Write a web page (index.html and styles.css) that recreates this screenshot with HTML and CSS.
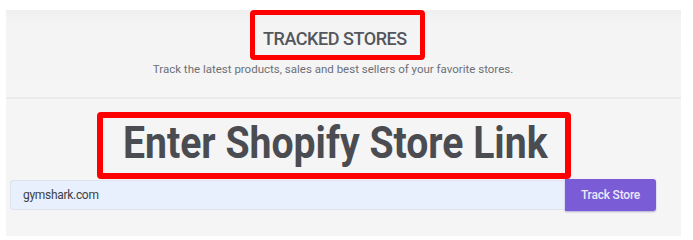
FILE: index.html
```html
<!DOCTYPE html>
<html>
<head>
<meta charset="utf-8">
<link rel="stylesheet" href="styles.css">
</head>
<body>
<div class="panel">
  <header class="head">
    <div class="mark mark-title"><h1 class="title">TRACKED STORES</h1></div>
    <p class="subtitle">Track the latest products, sales and best sellers of your favorite stores.</p>
  </header>
  <section class="body">
    <div class="mark mark-big"><h2 class="big">Enter Shopify Store Link</h2></div>
    <form class="track">
      <input class="track-input" type="text" value="gymshark.com">
      <button class="track-btn" type="button">Track Store</button>
    </form>
  </section>
</div>
</body>
</html>
```
FILE: styles.css
```css
html, body {
  margin: 0;
  padding: 0;
  background: #ffffff;
  width: 693px;
  height: 240px;
  overflow: hidden;
  font-family: Roboto, "Liberation Sans", Arial, sans-serif;
}
.panel {
  margin: 10px 12px 0 6px;
  height: 226px;
  background: #f5f5f5;
  display: flex;
  flex-direction: column;
}
.head {
  border-bottom: 2px solid #ebebeb;
  background: linear-gradient(#efefef 0, #f4f4f4 12px, #f5f5f5 100%);
  padding: 0 25px 0 4px;
  text-align: center;
  box-sizing: border-box;
  height: 89px;
}
.mark {
  display: inline-block;
  border: 5px solid #ff0000;
  border-radius: 4px;
  box-sizing: border-box;
  text-align: left;
}
.mark-title {
  width: 175px;
  height: 50px;
  margin-left: 9px;
  padding: 13px 0 0 8px;
}
.title {
  margin: 0;
  font-size: 18px;
  font-weight: 500;
  line-height: 21px;
  color: #53575d;
  letter-spacing: -0.45px;
}
.subtitle {
  margin: 3px 0 0;
  font-size: 11.5px;
  line-height: 13px;
  color: #6c7076;
}
.body {
  flex: 1;
  padding: 13px 25px 0 4px;
  text-align: center;
}
.mark-big {
  width: 474px;
  height: 67px;
  border-width: 6px;
  margin-left: 2px;
  padding: 2px 0 0 20px;
}
.big {
  display: inline-block;
  margin: 0;
  font-size: 45px;
  font-weight: 700;
  line-height: 45px;
  color: #4a4c51;
  white-space: nowrap;
  transform: scaleX(0.87);
  transform-origin: 0 50%;
}
.track {
  display: flex;
  align-items: center;
  margin: 0;
  height: 32px;
}
.track-input {
  flex: 1;
  height: 30px;
  box-sizing: border-box;
  margin: 0;
  border: 1px solid #dde4ef;
  border-right: 0;
  border-radius: 3px 0 0 3px;
  background: #e8f0fe;
  padding: 0 12px;
  font-family: Roboto, "Liberation Sans", Arial, sans-serif;
  font-size: 12px;
  letter-spacing: -0.3px;
  color: #3c3f44;
  outline: none;
}
.track-btn {
  width: 91px;
  height: 32px;
  margin: 0;
  border: 0;
  border-radius: 0 3px 3px 0;
  background: #7a5cd6;
  color: #ece8fb;
  font-family: Roboto, "Liberation Sans", Arial, sans-serif;
  font-size: 12px;
  font-weight: 500;
  letter-spacing: -0.2px;
  box-shadow: 0 1px 2px rgba(60, 40, 140, 0.35);
  padding: 0;
}
```
